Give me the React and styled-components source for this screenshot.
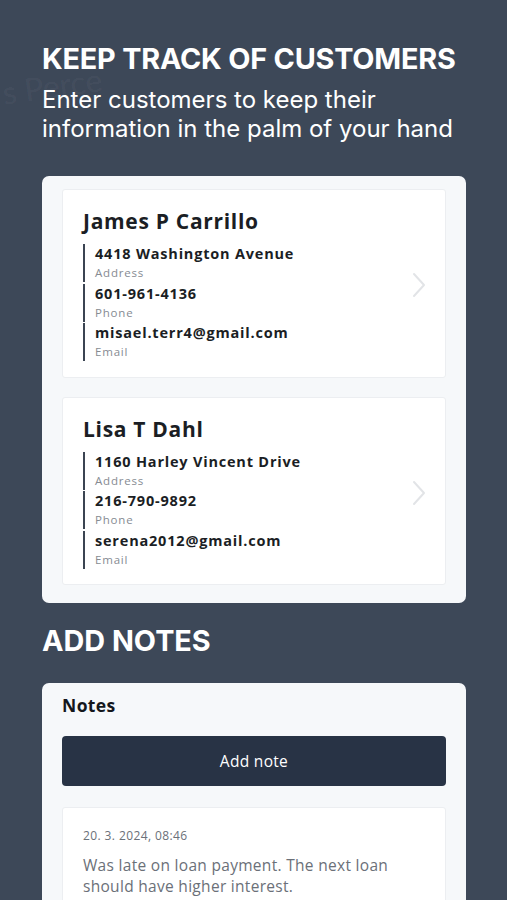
import React from "react";
import styled, { createGlobalStyle } from "styled-components";

const Global = createGlobalStyle`
  html, body { margin: 0; padding: 0; }
  body { background: #3d4858; font-family: Inter, "Noto Sans", sans-serif; }
  * { box-sizing: border-box; }
`;

const Page = styled.div`
  width: 507px;
  height: 900px;
  overflow: hidden;
  background: #3d4858;
  padding: 40px 41px 0 42px;
  position: relative;
`;

const Watermark = styled.div`
  position: absolute;
  color: rgba(255,255,255,0.05);
  font-family: Lato, sans-serif;
  font-size: ${p => p.$size}px;
  transform: rotate(${p => p.$rot}deg);
  left: ${p => p.$x}px;
  top: ${p => p.$y}px;
  pointer-events: none;
`;

const Title = styled.h1`
  margin: 0;
  color: #fff;
  font-family: Inter, sans-serif;
  font-weight: 700;
  font-size: 28.8px;
  letter-spacing: -0.2px;
  line-height: 38px;
`;

const Subtitle = styled.p`
  margin: 7px 0 0;
  color: #fff;
  font-family: Inter, sans-serif;
  font-weight: 400;
  font-size: 24px;
  line-height: 29px;
  letter-spacing: 0px;
`;

const Panel = styled.div`
  position: relative;
  margin-top: ${p => p.$mt || 0}px;
  background: #f6f8fa;
  border-radius: 7px;
  padding: ${p => p.$pad};
  display: flex;
  flex-direction: column;
  gap: ${p => p.$gap || 0}px;
`;

const CustomerCard = styled.div`
  background: #fff;
  border: 1px solid #eceef1;
  border-radius: 3px;
  padding: 18px 20px 14px 20px;
  display: flex;
  align-items: center;
`;

const CardBody = styled.div`
  flex: 1;
  display: flex;
  flex-direction: column;
`;

const Name = styled.div`
  font-family: "Open Sans", sans-serif;
  font-weight: 700;
  font-size: 21px;
  color: #1b1e24;
  letter-spacing: 0.7px;
  line-height: 27px;
  margin-bottom: 9px;
`;

const Field = styled.div`
  border-left: 2px solid #3b4452;
  padding-left: 10px;
  display: flex;
  flex-direction: column;
  margin-bottom: 1.5px;
`;

const Value = styled.div`
  font-family: "Open Sans", sans-serif;
  font-weight: 700;
  font-size: 14.5px;
  letter-spacing: 0.8px;
  color: #1b1e24;
  line-height: 20px;
`;

const Label = styled.div`
  font-family: "Open Sans", sans-serif;
  font-size: 11.5px;
  color: #868b92;
  letter-spacing: 0.8px;
  line-height: 18px;
`;

const Chevron = styled.svg`
  width: 16px;
  height: 26px;
  margin-right: -2px;
  flex-shrink: 0;
`;

const SectionTitle = styled.h2`
  margin: 19px 0 0;
  color: #fff;
  font-family: Inter, sans-serif;
  font-weight: 700;
  font-size: 28.8px;
  line-height: 38px;
`;

const NotesHeading = styled.div`
  font-family: "Open Sans", sans-serif;
  font-weight: 700;
  font-size: 17.5px;
  color: #14171c;
  line-height: 24px;
  letter-spacing: 0.4px;
`;

const Button = styled.button`
  height: 50px;
  margin-top: 19px;
  border: none;
  border-radius: 4px;
  background: #283345;
  color: #fff;
  font-family: "Open Sans", sans-serif;
  font-size: 15.5px;
  letter-spacing: 0.3px;
  font-weight: 500;
  cursor: pointer;
`;

const NoteCard = styled.div`
  margin-top: 21px;
  background: #fff;
  border: 1px solid #eceef1;
  border-radius: 3px;
  padding: 19px 20px 20px 20px;
  display: flex;
  flex-direction: column;
  gap: 11px;
`;

const NoteDate = styled.div`
  font-family: "Open Sans", sans-serif;
  font-size: 12px;
  color: #6b7078;
  letter-spacing: 0.4px;
  line-height: 17px;
`;

const NoteText = styled.div`
  font-family: "Open Sans", sans-serif;
  font-size: 15.5px;
  color: #6b7078;
  letter-spacing: 0.3px;
  line-height: 21px;
`;

const customers = [
  { name: "James P Carrillo", address: "4418 Washington Avenue", phone: "601-961-4136", email: "misael.terr4@gmail.com" },
  { name: "Lisa T Dahl", address: "1160 Harley Vincent Drive", phone: "216-790-9892", email: "serena2012@gmail.com" },
];

function Customer({ c }) {
  return (
    <CustomerCard>
      <CardBody>
        <Name>{c.name}</Name>
        <Field><Value>{c.address}</Value><Label>Address</Label></Field>
        <Field><Value>{c.phone}</Value><Label>Phone</Label></Field>
        <Field><Value>{c.email}</Value><Label>Email</Label></Field>
      </CardBody>
      <Chevron viewBox="0 0 16 26">
        <path d="M3 2 L13 13 L3 24" fill="none" stroke="#e2e4e7" strokeWidth="2" strokeLinecap="round" strokeLinejoin="round" />
      </Chevron>
    </CustomerCard>
  );
}

export default function App() {
  return (
    <>
      <Global />
      <Page>
        <Watermark $x={2} $y={66} $size={32} $rot={-8}>s Perce</Watermark>
        <Watermark $x={445} $y={255} $size={40} $rot={-30}>s</Watermark>
        <Title>KEEP TRACK OF CUSTOMERS</Title>
        <Subtitle>Enter customers to keep their information in the palm of your hand</Subtitle>
        <Panel $mt={33} $pad="13px 20px 18px 20px" $gap={19}>
          {customers.map(c => <Customer key={c.name} c={c} />)}
        </Panel>
        <SectionTitle>ADD NOTES</SectionTitle>
        <Panel $mt={23} $pad="10px 20px 20px 20px" $gap={0}>
          <NotesHeading>Notes</NotesHeading>
          <Button>Add note</Button>
          <NoteCard>
            <NoteDate>20. 3. 2024, 08:46</NoteDate>
            <NoteText>Was late on loan payment. The next loan should have higher interest.</NoteText>
          </NoteCard>
        </Panel>
      </Page>
    </>
  );
}
